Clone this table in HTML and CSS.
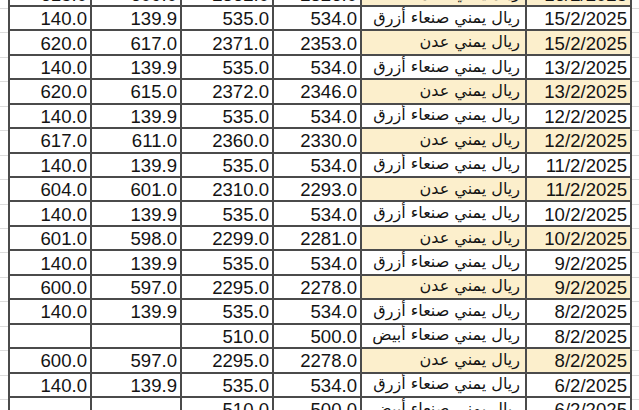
FILE: index.html
```html
<!DOCTYPE html>
<html lang="ar">
<head>
<meta charset="utf-8">
<link rel="stylesheet" href="styles.css">
</head>
<body>
<div class="sheet">
  <div class="grid">
    <div class="c n">615.0</div><div class="c n">609.0</div><div class="c n">2362.0</div><div class="c n">2326.0</div><div class="c t y">ريال يمني عدن</div><div class="c n y">16/2/2025</div>

    <div class="c n">140.0</div><div class="c n">139.9</div><div class="c n">535.0</div><div class="c n">534.0</div><div class="c t">ريال يمني صنعاء أزرق</div><div class="c n">15/2/2025</div>
    <div class="c n">620.0</div><div class="c n">617.0</div><div class="c n">2371.0</div><div class="c n">2353.0</div><div class="c t y">ريال يمني عدن</div><div class="c n y">15/2/2025</div>
    <div class="c n">140.0</div><div class="c n">139.9</div><div class="c n">535.0</div><div class="c n">534.0</div><div class="c t">ريال يمني صنعاء أزرق</div><div class="c n">13/2/2025</div>
    <div class="c n">620.0</div><div class="c n">615.0</div><div class="c n">2372.0</div><div class="c n">2346.0</div><div class="c t y">ريال يمني عدن</div><div class="c n y">13/2/2025</div>
    <div class="c n">140.0</div><div class="c n">139.9</div><div class="c n">535.0</div><div class="c n">534.0</div><div class="c t">ريال يمني صنعاء أزرق</div><div class="c n">12/2/2025</div>
    <div class="c n">617.0</div><div class="c n">611.0</div><div class="c n">2360.0</div><div class="c n">2330.0</div><div class="c t y">ريال يمني عدن</div><div class="c n y">12/2/2025</div>
    <div class="c n">140.0</div><div class="c n">139.9</div><div class="c n">535.0</div><div class="c n">534.0</div><div class="c t">ريال يمني صنعاء أزرق</div><div class="c n">11/2/2025</div>
    <div class="c n">604.0</div><div class="c n">601.0</div><div class="c n">2310.0</div><div class="c n">2293.0</div><div class="c t y">ريال يمني عدن</div><div class="c n y">11/2/2025</div>
    <div class="c n">140.0</div><div class="c n">139.9</div><div class="c n">535.0</div><div class="c n">534.0</div><div class="c t">ريال يمني صنعاء أزرق</div><div class="c n">10/2/2025</div>
    <div class="c n">601.0</div><div class="c n">598.0</div><div class="c n">2299.0</div><div class="c n">2281.0</div><div class="c t y">ريال يمني عدن</div><div class="c n y">10/2/2025</div>
    <div class="c n">140.0</div><div class="c n">139.9</div><div class="c n">535.0</div><div class="c n">534.0</div><div class="c t">ريال يمني صنعاء أزرق</div><div class="c n">9/2/2025</div>
    <div class="c n">600.0</div><div class="c n">597.0</div><div class="c n">2295.0</div><div class="c n">2278.0</div><div class="c t y">ريال يمني عدن</div><div class="c n y">9/2/2025</div>
    <div class="c n">140.0</div><div class="c n">139.9</div><div class="c n">535.0</div><div class="c n">534.0</div><div class="c t">ريال يمني صنعاء أزرق</div><div class="c n">8/2/2025</div>
    <div class="c n"></div><div class="c n"></div><div class="c n">510.0</div><div class="c n">500.0</div><div class="c t">ريال يمني صنعاء أبيض</div><div class="c n">8/2/2025</div>
    <div class="c n">600.0</div><div class="c n">597.0</div><div class="c n">2295.0</div><div class="c n">2278.0</div><div class="c t y">ريال يمني عدن</div><div class="c n y">8/2/2025</div>
    <div class="c n">140.0</div><div class="c n">139.9</div><div class="c n">535.0</div><div class="c n">534.0</div><div class="c t">ريال يمني صنعاء أزرق</div><div class="c n">6/2/2025</div>
    <div class="c n"></div><div class="c n"></div><div class="c n">510.0</div><div class="c n">500.0</div><div class="c t">ريال يمني صنعاء أبيض</div><div class="c n">6/2/2025</div>
  </div>
</div>
</body>
</html>
```

FILE: styles.css
```css
html, body {
  margin: 0;
  padding: 0;
  background: #ffffff;
}
body {
  width: 639px;
  height: 410px;
  overflow: hidden;
}
.sheet {
  height: 410px;
  overflow: hidden;
  background-image: repeating-linear-gradient(
    to bottom,
    transparent 0px,
    transparent 8px,
    #dcdcdc 8px,
    #dcdcdc 9px,
    transparent 9px,
    transparent 24.44px
  );
}
.grid {
  margin: -19.5px 0 0 8px;
  width: 624px;
  display: grid;
  grid-template-columns: 80px 88px 90px 86px 163px 103px;
  grid-auto-rows: 22.44px;
  gap: 2px;
  padding: 2px;
  box-sizing: border-box;
  background: #4b4b4b;
}
.c {
  background: #ffffff;
  color: #141414;
  display: flex;
  align-items: center;
  justify-content: flex-end;
  padding: 2px 3px 0 0;
  box-sizing: border-box;
  white-space: nowrap;
  overflow: hidden;
}
.n {
  font-family: "Liberation Sans", Arial, sans-serif;
  font-size: 18.6px;
}
.t {
  font-family: "DejaVu Sans", "Noto Sans", sans-serif;
  font-size: 16px;
  direction: rtl;
  justify-content: flex-start;
  padding: 0 5px 2px 0;
}
.y {
  background: #fcefcc;
}
```
